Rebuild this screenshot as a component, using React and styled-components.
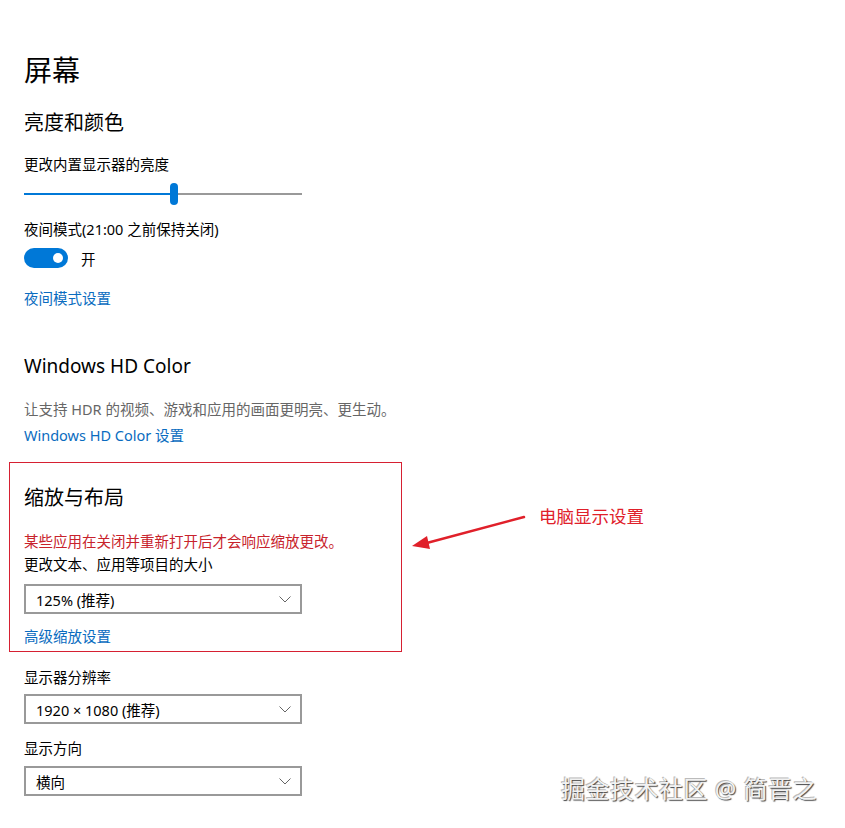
import React from "react";
import styled, { createGlobalStyle } from "styled-components";

const FONT = `"Noto Sans", "Noto Sans CJK SC", sans-serif`;

const GlobalStyle = createGlobalStyle`
  html, body {
    margin: 0;
    padding: 0;
    background: #fff;
  }
  body {
    font-family: ${FONT};
    color: #000;
  }
`;

const Page = styled.div`
  position: relative;
  width: 845px;
  height: 828px;
  padding: 50px 0 0 24px;
  box-sizing: border-box;
  overflow: hidden;
`;

const Title = styled.h1`
  margin: 0;
  font-size: 28px;
  font-weight: 400;
  line-height: 40px;
`;

const SectionTitle = styled.h2`
  margin: ${p => p.$top || 0}px 0 0;
  font-size: ${p => (p.$latin ? 19 : 20)}px;
  font-weight: 400;
  line-height: 28px;
`;

const Text = styled.div`
  margin-top: ${p => p.$top || 0}px;
  font-size: 14.5px;
  line-height: 20px;
  color: ${p => (p.$muted ? "#666" : p.$warn ? "#c8232c" : "#000")};
`;

const Link = styled.a`
  display: block;
  margin-top: ${p => p.$top || 0}px;
  font-size: 14.5px;
  line-height: 20px;
  color: #0a6cc0;
  text-decoration: none;
`;

const Slider = styled.div`
  width: 278px;
  height: 24px;
  margin-top: 8px;
  display: flex;
  align-items: center;
`;

const Track = styled.div`
  height: 2px;
  background: ${p => (p.$filled ? "#0078d7" : "#999")};
  flex: ${p => p.$grow};
`;

const Thumb = styled.div`
  width: 8px;
  height: 22px;
  border-radius: 4px;
  background: #0078d7;
  flex: none;
`;

const ToggleRow = styled.div`
  display: flex;
  align-items: center;
  gap: 13px;
  margin-top: 8px;
  height: 22px;
  font-size: 14.5px;
`;

const Toggle = styled.div`
  width: 44px;
  height: 20px;
  border-radius: 10px;
  background: #0078d7;
  display: flex;
  align-items: center;
  justify-content: flex-end;
  padding-right: 5px;
  box-sizing: border-box;
`;

const Knob = styled.div`
  width: 10px;
  height: 10px;
  border-radius: 50%;
  background: #fff;
`;

const Highlight = styled.section`
  position: relative;
  width: 393px;
  margin: 17px 0 0 -15px;
  padding: 21px 0 5px 14px;
  box-sizing: border-box;
  border: 1.5px solid #d62032;
`;

const Select = styled.div`
  width: 278px;
  height: 30px;
  margin-top: ${p => p.$top}px;
  border: 2px solid #999;
  box-sizing: border-box;
  display: flex;
  align-items: center;
  justify-content: space-between;
  padding: 0 9px 0 10px;
  font-size: 14.5px;
`;

const Callout = styled.div`
  position: absolute;
  left: 395px;
  top: 40px;
  width: 260px;
  height: 60px;
`;

const CalloutLabel = styled.span`
  position: absolute;
  left: 134px;
  top: 1px;
  font-size: 17.5px;
  line-height: 24px;
  color: #e0202a;
  white-space: nowrap;
`;

const Watermark = styled.div`
  position: absolute;
  left: 561px;
  top: 772px;
  font-size: 24px;
  line-height: 34px;
  letter-spacing: 0.5px;
  color: #f2f2f2;
  text-shadow: 1px 1px 1px #444, -1px -1px 0 #bbb;
  white-space: nowrap;
`;

function Chevron() {
  return (
    <svg width="12" height="7" viewBox="0 0 12 7">
      <polyline points="0.5,0.5 6,6 11.5,0.5" fill="none" stroke="#666" strokeWidth="1" />
    </svg>
  );
}

function Dropdown({ value, top }) {
  return (
    <Select $top={top}>
      <span>{value}</span>
      <Chevron />
    </Select>
  );
}

export default function App() {
  return (
    <>
      <GlobalStyle />
      <Page>
        <Title>屏幕</Title>
        <SectionTitle $top={19}>亮度和颜色</SectionTitle>
        <Text $top={17}>更改内置显示器的亮度</Text>
        <Slider>
          <Track $filled $grow="0 0 146px" />
          <Thumb />
          <Track $grow="1" />
        </Slider>
        <Text $top={13}>夜间模式(21:00 之前保持关闭)</Text>
        <ToggleRow>
          <Toggle>
            <Knob />
          </Toggle>
          <span>开</span>
        </ToggleRow>
        <Link $top={19}>夜间模式设置</Link>

        <SectionTitle $latin $top={44}>Windows HD Color</SectionTitle>
        <Text $muted $top={19}>让支持 HDR 的视频、游戏和应用的画面更明亮、更生动。</Text>
        <Link $top={6}>Windows HD Color 设置</Link>

        <Highlight>
          <SectionTitle>缩放与布局</SectionTitle>
          <Text $warn $top={19}>某些应用在关闭并重新打开后才会响应缩放更改。</Text>
          <Text $top={3}>更改文本、应用等项目的大小</Text>
          <Dropdown value="125% (推荐)" top={10} />
          <Link $top={12}>高级缩放设置</Link>
          <Callout>
            <svg width="140" height="60" viewBox="0 0 140 60">
              <line x1="119" y1="14" x2="18" y2="41" stroke="#e0202a" strokeWidth="2.5" strokeLinecap="round" />
              <polygon points="7,43 22,33 25,46" fill="#e0202a" />
            </svg>
            <CalloutLabel>电脑显示设置</CalloutLabel>
          </Callout>
        </Highlight>

        <Text $top={15}>显示器分辨率</Text>
        <Dropdown value="1920 × 1080 (推荐)" top={7} />
        <Text $top={14}>显示方向</Text>
        <Dropdown value="横向" top={8} />

        <Watermark>掘金技术社区 @ 简晋之</Watermark>
      </Page>
    </>
  );
}
